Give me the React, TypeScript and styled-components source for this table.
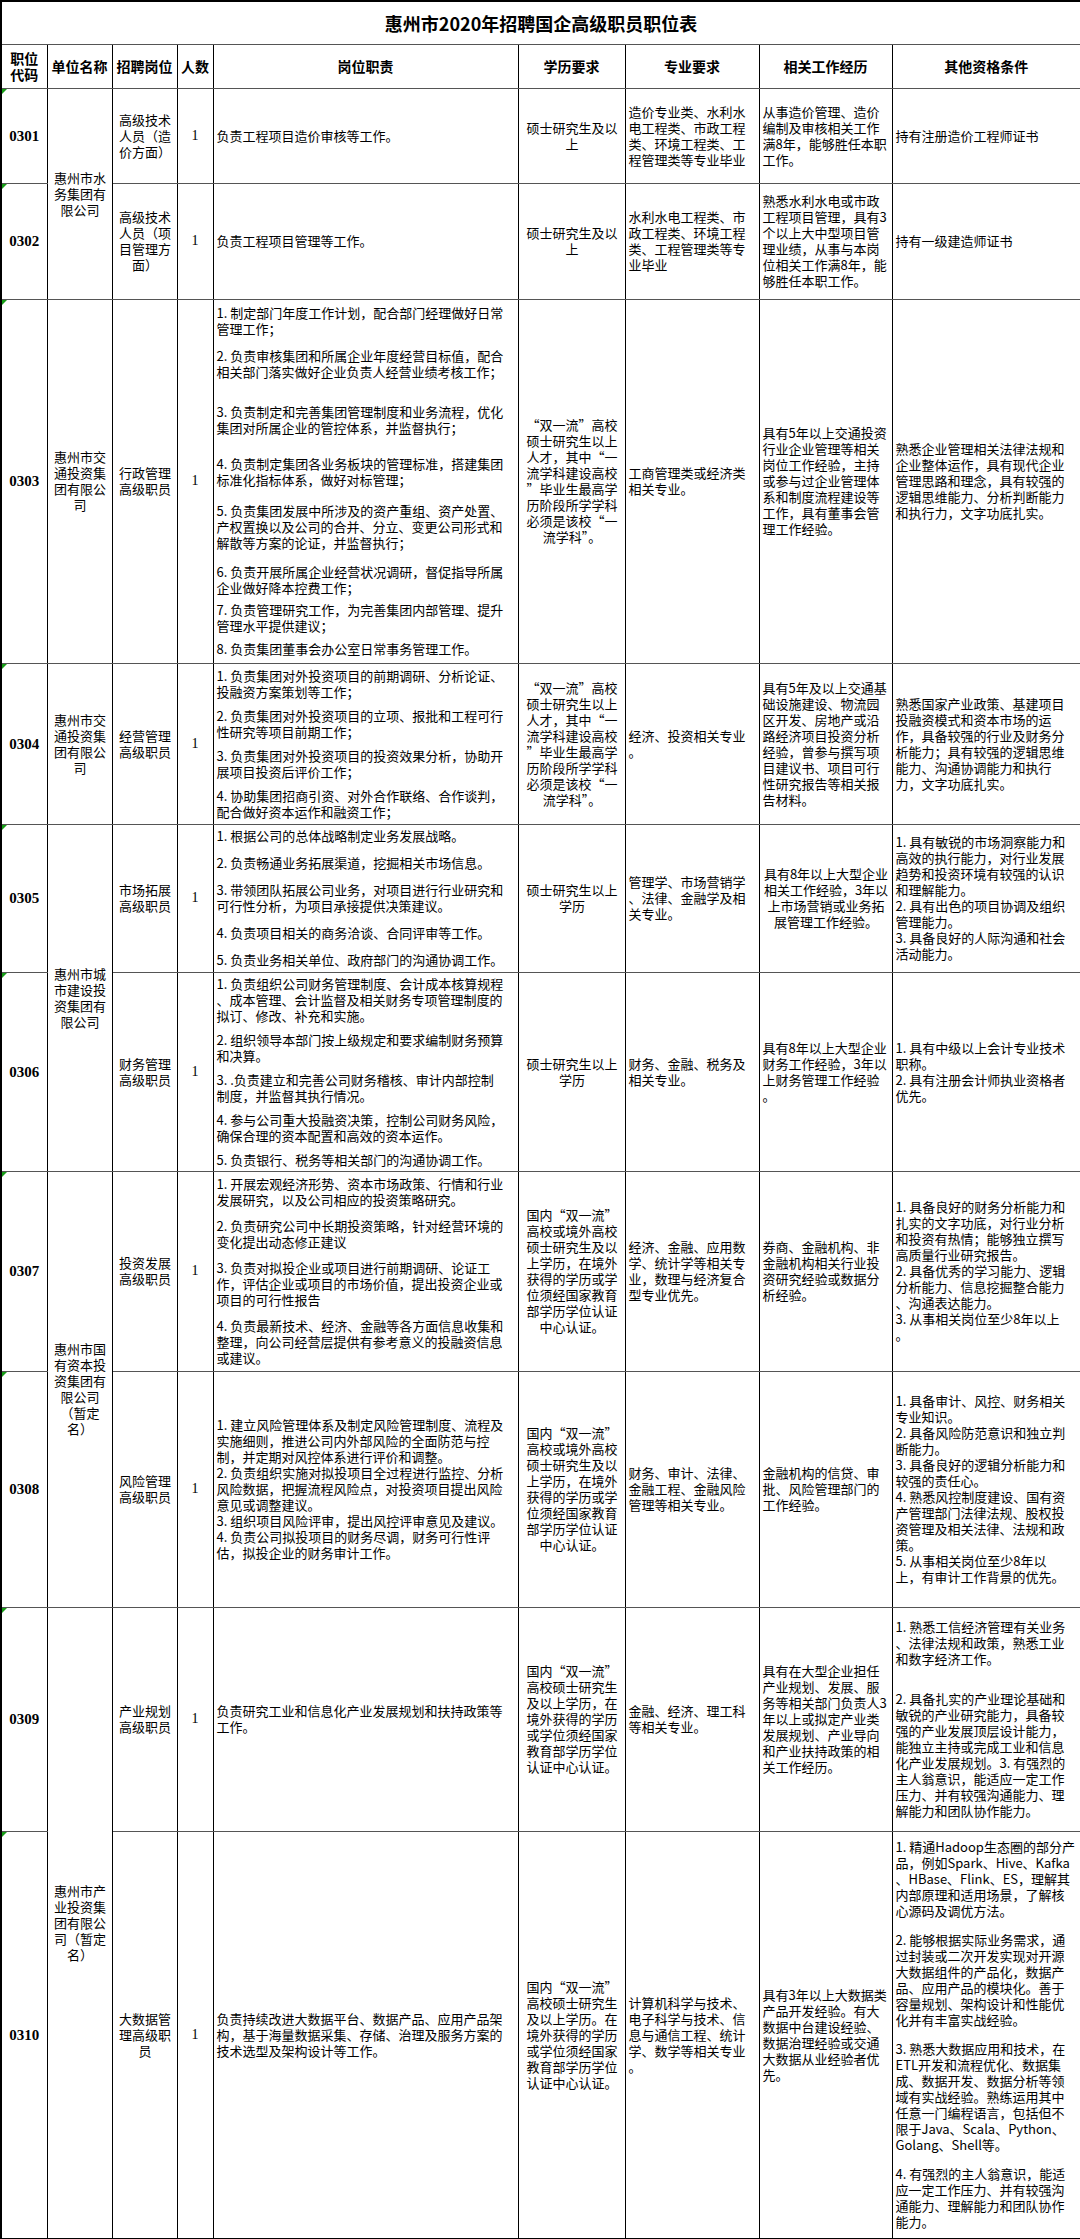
import React from 'react';
import styled, { createGlobalStyle } from 'styled-components';

const GlobalStyle = createGlobalStyle`
  html, body {
    margin: 0;
    padding: 0;
    background: #fff;
  }
  body {
    font-family: "Noto Sans CJK SC", "Liberation Sans", sans-serif;
    color: #000;
  }
`;

type Job = {
  code: string;
  h: number;
  unit?: { text: string; span: number };
  post: string;
  duty: string[];
  dutyGap: number | number[];
  edu: string;
  major: string;
  exp: string;
  expCenter?: boolean;
  other: string[];
  otherGap?: number;
};

const COLS = [46, 65, 65, 36, 305, 107, 134, 133, 189];
const HEADS = ['职位\n代码', '单位名称', '招聘岗位', '人数', '岗位职责', '学历要求', '专业要求', '相关工作经历', '其他资格条件'];

const SHUANG = '“双一流”高校\n硕士研究生以上\n人才，其中“一\n流学科建设高校\n”毕业生最高学\n历阶段所学学科\n必须是该校“一\n流学科”。';
const GUONEI = '国内“双一流”\n高校或境外高校\n硕士研究生及以\n上学历，在境外\n获得的学历或学\n位须经国家教育\n部学历学位认证\n中心认证。';

const JOBS: Job[] = [
  {
    code: '0301',
    h: 95,
    unit: { text: '惠州市水\n务集团有\n限公司', span: 2 },
    post: '高级技术\n人员（造\n价方面）',
    duty: ['负责工程项目造价审核等工作。'],
    dutyGap: 0,
    edu: '硕士研究生及以\n上',
    major: '造价专业类、水利水\n电工程类、市政工程\n类、环境工程类、工\n程管理类等专业毕业',
    exp: '从事造价管理、造价\n编制及审核相关工作\n满8年，能够胜任本职\n工作。',
    other: ['持有注册造价工程师证书'],
  },
  {
    code: '0302',
    h: 116,
    post: '高级技术\n人员（项\n目管理方\n面）',
    duty: ['负责工程项目管理等工作。'],
    dutyGap: 0,
    edu: '硕士研究生及以\n上',
    major: '水利水电工程类、市\n政工程类、环境工程\n类、工程管理类等专\n业毕业',
    exp: '熟悉水利水电或市政\n工程项目管理，具有3\n个以上大中型项目管\n理业绩，从事与本岗\n位相关工作满8年，能\n够胜任本职工作。',
    other: ['持有一级建造师证书'],
  },
  {
    code: '0303',
    h: 364,
    unit: { text: '惠州市交\n通投资集\n团有限公\n司', span: 1 },
    post: '行政管理\n高级职员',
    duty: [
      '1. 制定部门年度工作计划，配合部门经理做好日常\n管理工作；',
      '2. 负责审核集团和所属企业年度经营目标值，配合\n相关部门落实做好企业负责人经营业绩考核工作；',
      '3. 负责制定和完善集团管理制度和业务流程，优化\n集团对所属企业的管控体系，并监督执行；',
      '4. 负责制定集团各业务板块的管理标准，搭建集团\n标准化指标体系，做好对标管理；',
      '5. 负责集团发展中所涉及的资产重组、资产处置、\n产权置换以及公司的合并、分立、变更公司形式和\n解散等方案的论证，并监督执行；',
      '6. 负责开展所属企业经营状况调研，督促指导所属\n企业做好降本控费工作；',
      '7. 负责管理研究工作，为完善集团内部管理、提升\n管理水平提供建议；',
      '8. 负责集团董事会办公室日常事务管理工作。',
    ],
    dutyGap: [0, 11, 24, 20, 15, 13, 6, 7],
    edu: SHUANG,
    major: '工商管理类或经济类\n相关专业。',
    exp: '具有5年以上交通投资\n行业企业管理等相关\n岗位工作经验，主持\n或参与过企业管理体\n系和制度流程建设等\n工作，具有董事会管\n理工作经验。',
    other: ['熟悉企业管理相关法律法规和\n企业整体运作，具有现代企业\n管理思路和理念，具有较强的\n逻辑思维能力、分析判断能力\n和执行力，文字功底扎实。'],
  },
  {
    code: '0304',
    h: 161,
    unit: { text: '惠州市交\n通投资集\n团有限公\n司', span: 1 },
    post: '经营管理\n高级职员',
    duty: [
      '1. 负责集团对外投资项目的前期调研、分析论证、\n投融资方案策划等工作；',
      '2. 负责集团对外投资项目的立项、报批和工程可行\n性研究等项目前期工作；',
      '3. 负责集团对外投资项目的投资效果分析，协助开\n展项目投资后评价工作；',
      '4. 协助集团招商引资、对外合作联络、合作谈判，\n配合做好资本运作和融资工作；',
    ],
    dutyGap: 8,
    edu: SHUANG,
    major: '经济、投资相关专业\n。',
    exp: '具有5年及以上交通基\n础设施建设、物流园\n区开发、房地产或沿\n路经济项目投资分析\n经验，曾参与撰写项\n目建议书、项目可行\n性研究报告等相关报\n告材料。',
    other: ['熟悉国家产业政策、基建项目\n投融资模式和资本市场的运\n作，具备较强的行业及财务分\n析能力；具有较强的逻辑思维\n能力、沟通协调能力和执行\n力，文字功底扎实。'],
  },
  {
    code: '0305',
    h: 148,
    unit: { text: '惠州市城\n市建设投\n资集团有\n限公司', span: 2 },
    post: '市场拓展\n高级职员',
    duty: [
      '1. 根据公司的总体战略制定业务发展战略。',
      '2. 负责畅通业务拓展渠道，挖掘相关市场信息。',
      '3. 带领团队拓展公司业务，对项目进行行业研究和\n可行性分析，为项目承接提供决策建议。',
      '4. 负责项目相关的商务洽谈、合同评审等工作。',
      '5. 负责业务相关单位、政府部门的沟通协调工作。',
    ],
    dutyGap: 11,
    edu: '硕士研究生以上\n学历',
    major: '管理学、市场营销学\n、法律、金融学及相\n关专业。',
    exp: '具有8年以上大型企业\n相关工作经验，3年以\n上市场营销或业务拓\n展管理工作经验。',
    expCenter: true,
    other: ['1. 具有敏锐的市场洞察能力和\n高效的执行能力，对行业发展\n趋势和投资环境有较强的认识\n和理解能力。\n2. 具有出色的项目协调及组织\n管理能力。\n3. 具备良好的人际沟通和社会\n活动能力。'],
  },
  {
    code: '0306',
    h: 199,
    post: '财务管理\n高级职员',
    duty: [
      '1. 负责组织公司财务管理制度、会计成本核算规程\n、成本管理、会计监督及相关财务专项管理制度的\n拟订、修改、补充和实施。',
      '2. 组织领导本部门按上级规定和要求编制财务预算\n和决算。',
      '3. .负责建立和完善公司财务稽核、审计内部控制\n制度，并监督其执行情况。',
      '4. 参与公司重大投融资决策，控制公司财务风险，\n确保合理的资本配置和高效的资本运作。',
      '5. 负责银行、税务等相关部门的沟通协调工作。',
    ],
    dutyGap: 8,
    edu: '硕士研究生以上\n学历',
    major: '财务、金融、税务及\n相关专业。',
    exp: '具有8年以上大型企业\n财务工作经验，3年以\n上财务管理工作经验\n。',
    other: ['1. 具有中级以上会计专业技术\n职称。\n2. 具有注册会计师执业资格者\n优先。'],
  },
  {
    code: '0307',
    h: 200,
    unit: { text: '惠州市国\n有资本投\n资集团有\n限公司\n（暂定\n名）', span: 2 },
    post: '投资发展\n高级职员',
    duty: [
      '1. 开展宏观经济形势、资本市场政策、行情和行业\n发展研究，以及公司相应的投资策略研究。',
      '2. 负责研究公司中长期投资策略，针对经营环境的\n变化提出动态修正建议',
      '3. 负责对拟投企业或项目进行前期调研、论证工\n作，评估企业或项目的市场价值，提出投资企业或\n项目的可行性报告',
      '4. 负责最新技术、经济、金融等各方面信息收集和\n整理，向公司经营层提供有参考意义的投融资信息\n或建议。',
    ],
    dutyGap: 10,
    edu: GUONEI,
    major: '经济、金融、应用数\n学、统计学等相关专\n业，数理与经济复合\n型专业优先。',
    exp: '券商、金融机构、非\n金融机构相关行业投\n资研究经验或数据分\n析经验。',
    other: ['1. 具备良好的财务分析能力和\n扎实的文字功底，对行业分析\n和投资有热情；能够独立撰写\n高质量行业研究报告。\n2. 具备优秀的学习能力、逻辑\n分析能力、信息挖掘整合能力\n、沟通表达能力。\n3. 从事相关岗位至少8年以上\n。'],
  },
  {
    code: '0308',
    h: 236,
    post: '风险管理\n高级职员',
    duty: [
      '1. 建立风险管理体系及制定风险管理制度、流程及\n实施细则，推进公司内外部风险的全面防范与控\n制，并定期对风控体系进行评价和调整。\n2. 负责组织实施对拟投项目全过程进行监控、分析\n风险数据，把握流程风险点，对投资项目提出风险\n意见或调整建议。\n3. 组织项目风险评审，提出风控评审意见及建议。\n4. 负责公司拟投项目的财务尽调，财务可行性评\n估，拟投企业的财务审计工作。',
    ],
    dutyGap: 0,
    edu: GUONEI,
    major: '财务、审计、法律、\n金融工程、金融风险\n管理等相关专业。',
    exp: '金融机构的信贷、审\n批、风险管理部门的\n工作经验。',
    other: ['1. 具备审计、风控、财务相关\n专业知识。\n2. 具备风险防范意识和独立判\n断能力。\n3. 具备良好的逻辑分析能力和\n较强的责任心。\n4. 熟悉风控制度建设、国有资\n产管理部门法律法规、股权投\n资管理及相关法律、法规和政\n策。\n5. 从事相关岗位至少8年以\n上，有审计工作背景的优先。'],
  },
  {
    code: '0309',
    h: 224,
    unit: { text: '惠州市产\n业投资集\n团有限公\n司（暂定\n名）', span: 2 },
    post: '产业规划\n高级职员',
    duty: ['负责研究工业和信息化产业发展规划和扶持政策等\n工作。'],
    dutyGap: 0,
    edu: '国内“双一流”\n高校硕士研究生\n及以上学历，在\n境外获得的学历\n或学位须经国家\n教育部学历学位\n认证中心认证。',
    major: '金融、经济、理工科\n等相关专业。',
    exp: '具有在大型企业担任\n产业规划、发展、服\n务等相关部门负责人3\n年以上或拟定产业类\n发展规划、产业导向\n和产业扶持政策的相\n关工作经历。',
    other: [
      '1. 熟悉工信经济管理有关业务\n、法律法规和政策，熟悉工业\n和数字经济工作。',
      '2. 具备扎实的产业理论基础和\n敏锐的产业研究能力，具备较\n强的产业发展顶层设计能力，\n能独立主持或完成工业和信息\n化产业发展规划。3. 有强烈的\n主人翁意识，能适应一定工作\n压力、并有较强沟通能力、理\n解能力和团队协作能力。',
    ],
    otherGap: 24,
  },
  {
    code: '0310',
    h: 408,
    post: '大数据管\n理高级职\n员',
    duty: ['负责持续改进大数据平台、数据产品、应用产品架\n构，基于海量数据采集、存储、治理及服务方案的\n技术选型及架构设计等工作。'],
    dutyGap: 0,
    edu: '国内“双一流”\n高校硕士研究生\n及以上学历。在\n境外获得的学历\n或学位须经国家\n教育部学历学位\n认证中心认证。',
    major: '计算机科学与技术、\n电子科学与技术、信\n息与通信工程、统计\n学、数学等相关专业\n。',
    exp: '具有3年以上大数据类\n产品开发经验。有大\n数据中台建设经验、\n数据治理经验或交通\n大数据从业经验者优\n先。',
    other: [
      '1. 精通Hadoop生态圈的部分产\n品，例如Spark、Hive、Kafka\n、HBase、Flink、ES，理解其\n内部原理和适用场景，了解核\n心源码及调优方法。',
      '2. 能够根据实际业务需求，通\n过封装或二次开发实现对开源\n大数据组件的产品化，数据产\n品、应用产品的模块化。善于\n容量规划、架构设计和性能优\n化并有丰富实战经验。',
      '3. 熟悉大数据应用和技术，在\nETL开发和流程优化、数据集\n成、数据开发、数据分析等领\n域有实战经验。熟练运用其中\n任意一门编程语言，包括但不\n限于Java、Scala、Python、\nGolang、Shell等。',
      '4. 有强烈的主人翁意识，能适\n应一定工作压力、并有较强沟\n通能力、理解能力和团队协作\n能力。',
    ],
    otherGap: 13,
  },
];

const Sheet = styled.table`
  width: 1080px;
  border-collapse: collapse;
  table-layout: fixed;
  border: 2px solid #000;
`;

const Col = styled.col<{ $w: number }>`
  width: ${p => p.$w}px;
`;

const Row = styled.tr<{ $h: number }>`
  height: ${p => p.$h}px;
`;

const TitleCell = styled.th`
  padding: 0;
  font-size: 18px;
  font-weight: 700;
  text-align: center;
  vertical-align: middle;
  border-bottom: 1px solid #555;
`;

const HeadCell = styled.th`
  padding: 0;
  font-size: 14px;
  font-weight: 700;
  line-height: 16px;
  text-align: center;
  vertical-align: middle;
  white-space: pre;
  border-left: 1px solid #000;
  border-right: 1px solid #000;
  border-bottom: 1px solid #555;
`;

const Cell = styled.td<{ $center?: boolean }>`
  padding: 0 2px 0 3px;
  font-size: 13px;
  line-height: 16px;
  text-align: ${p => (p.$center ? 'center' : 'left')};
  vertical-align: middle;
  white-space: pre;
  border-left: 1px solid #000;
  border-right: 1px solid #000;
  border-top: 1px solid #555;
  border-bottom: 1px solid #555;
`;

const CodeCell = styled(Cell)`
  position: relative;
  padding: 0;
  font-family: "Liberation Serif", serif;
  font-size: 15px;
  font-weight: 700;
  text-align: center;

  &::before {
    content: '';
    position: absolute;
    top: 0;
    left: 0;
    border-top: 5px solid #169c16;
    border-right: 5px solid transparent;
  }
`;

const CountCell = styled(Cell)`
  padding: 0;
  font-family: "Liberation Serif", serif;
  font-size: 14px;
  text-align: center;
`;

const Para = styled.div<{ $gap: number }>`
  margin-top: ${p => p.$gap}px;
`;

const Paras = ({ items, gap = 0 }: { items: string[]; gap?: number | number[] }) => (
  <>
    {items.map((t, i) => (
      <Para key={i} $gap={i === 0 ? 0 : Array.isArray(gap) ? gap[i] : gap}>
        {t}
      </Para>
    ))}
  </>
);

export default function App() {
  return (
    <>
      <GlobalStyle />
      <Sheet>
        <colgroup>
          {COLS.map((w, i) => (
            <Col key={i} $w={w} />
          ))}
        </colgroup>
        <thead>
          <Row $h={43}>
            <TitleCell colSpan={9}>惠州市2020年招聘国企高级职员职位表</TitleCell>
          </Row>
          <Row $h={44}>
            {HEADS.map(h => (
              <HeadCell key={h}>{h}</HeadCell>
            ))}
          </Row>
        </thead>
        <tbody>
          {JOBS.map(job => (
            <Row key={job.code} $h={job.h}>
              <CodeCell>{job.code}</CodeCell>
              {job.unit && (
                <Cell $center rowSpan={job.unit.span}>
                  {job.unit.text}
                </Cell>
              )}
              <Cell $center>{job.post}</Cell>
              <CountCell>1</CountCell>
              <Cell>
                <Paras items={job.duty} gap={job.dutyGap} />
              </Cell>
              <Cell $center>{job.edu}</Cell>
              <Cell>{job.major}</Cell>
              <Cell $center={job.expCenter}>{job.exp}</Cell>
              <Cell>
                <Paras items={job.other} gap={job.otherGap} />
              </Cell>
            </Row>
          ))}
        </tbody>
      </Sheet>
    </>
  );
}
